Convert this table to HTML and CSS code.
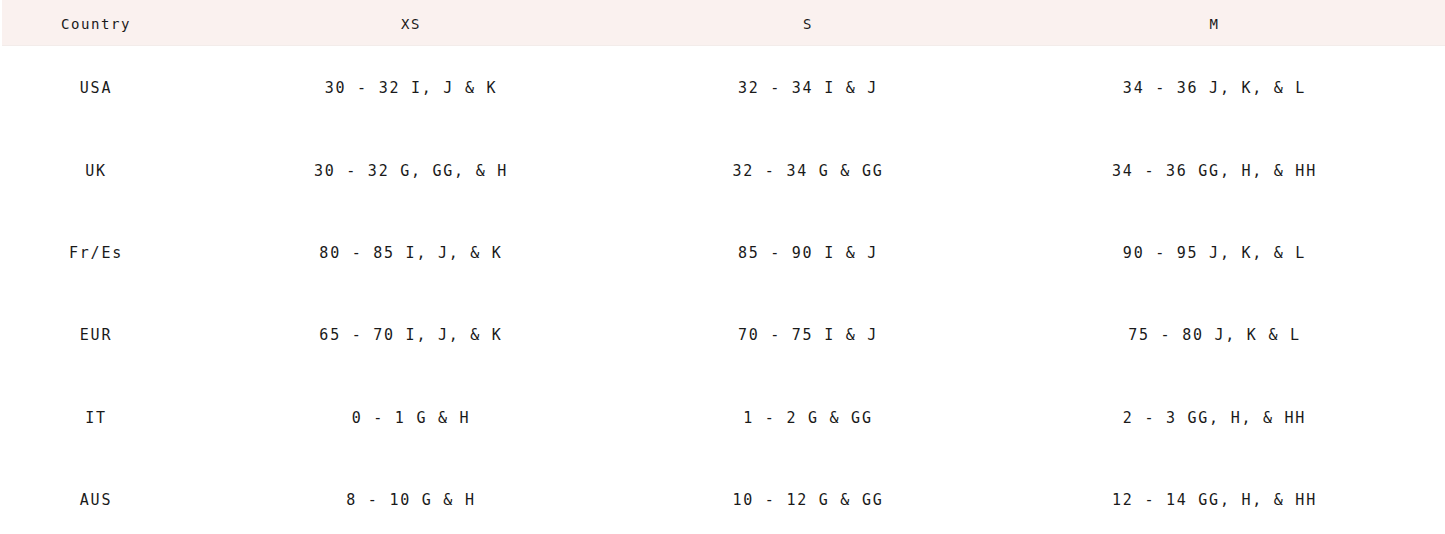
FILE: index.html
```html
<!DOCTYPE html>
<html lang="en">
<head>
<meta charset="utf-8">
<title>Size chart</title>
<link rel="stylesheet" href="styles.css">
</head>
<body>
<div class="chart">
  <div class="row head">
    <div class="cell">Country</div><div class="cell">XS</div><div class="cell">S</div><div class="cell">M</div>
  </div>
  <div class="row">
    <div class="cell">USA</div><div class="cell">30 - 32 I, J &amp; K</div><div class="cell">32 - 34 I &amp; J</div><div class="cell">34 - 36 J, K, &amp; L</div>
  </div>
  <div class="row">
    <div class="cell">UK</div><div class="cell">30 - 32 G, GG, &amp; H</div><div class="cell">32 - 34 G &amp; GG</div><div class="cell">34 - 36 GG, H, &amp; HH</div>
  </div>
  <div class="row">
    <div class="cell">Fr/Es</div><div class="cell">80 - 85 I, J, &amp; K</div><div class="cell">85 - 90 I &amp; J</div><div class="cell">90 - 95 J, K, &amp; L</div>
  </div>
  <div class="row">
    <div class="cell">EUR</div><div class="cell">65 - 70 I, J, &amp; K</div><div class="cell">70 - 75 I &amp; J</div><div class="cell">75 - 80 J, K &amp; L</div>
  </div>
  <div class="row">
    <div class="cell">IT</div><div class="cell">0 - 1 G &amp; H</div><div class="cell">1 - 2 G &amp; GG</div><div class="cell">2 - 3 GG, H, &amp; HH</div>
  </div>
  <div class="row">
    <div class="cell">AUS</div><div class="cell">8 - 10 G &amp; H</div><div class="cell">10 - 12 G &amp; GG</div><div class="cell">12 - 14 GG, H, &amp; HH</div>
  </div>
</div>
</body>
</html>
```

FILE: styles.css
```css
html, body {
  margin: 0;
  padding: 0;
  background: #ffffff;
}
body {
  font-family: "DejaVu Sans Mono", "Liberation Mono", monospace;
  color: #1a1a1a;
  overflow: hidden;
}
.chart {
  margin-left: 2px;
  display: flex;
  flex-direction: column;
}
.row {
  display: grid;
  grid-template-columns: 188px 442px 352px 1fr;
  height: 82.4px;
  align-items: center;
  font-size: 15px;
  letter-spacing: 1.75px;
}
.row.head {
  height: 46px;
  background: #faf1ef;
  font-size: 14px;
  letter-spacing: 1.6px;
  border-bottom: 1px solid #f3ecea;
  box-sizing: border-box;
}
.cell {
  text-align: center;
  white-space: nowrap;
  padding-top: 2px;
}
```
